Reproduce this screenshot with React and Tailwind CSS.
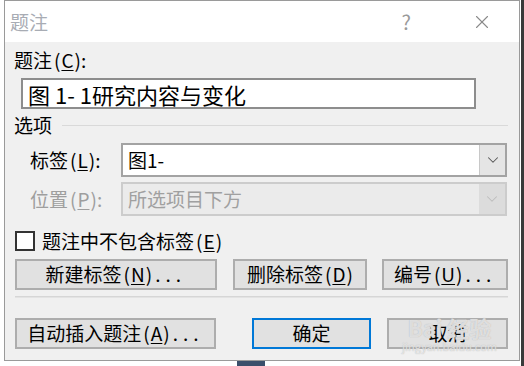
import { ChevronDown, X } from 'lucide-react'

const font = "font-['Noto_Sans_CJK_SC','Noto_Sans',sans-serif]"

function Key({ k }) {
  return (
    <span className="ml-[2px]">
      (<span className="underline underline-offset-2 px-[1px]">{k}</span>)
    </span>
  )
}

function Btn({ children, className = '', primary }) {
  return (
    <div
      className={`h-[31px] flex items-center justify-center bg-[#e1e1e1] text-[19px] text-black ${
        primary ? 'border-2 border-[#0078d7]' : 'border-2 border-[#adadad]'
      } ${className}`}
    >
      {children}
    </div>
  )
}

export default function App() {
  return (
    <div className={`relative w-[524px] h-[366px] bg-white overflow-hidden ${font}`}>
      {/* bits of the window behind */}
      <div className="absolute right-0 top-0 w-[3px] h-[366px] bg-[#3a3a3a]" />
      <div className="absolute left-[237px] bottom-0 w-[28px] h-[5px] bg-[#3b4f6b]" />

      <div className="ml-[4px] w-[516px] h-[361px] border border-[#9a9a9a] bg-[#f0f0f0] flex flex-col">
        {/* Title bar */}
        <div className="h-[41px] bg-white flex items-center pl-[5px] pr-[26px] shrink-0">
          <span className="text-[19px] text-[#a8acb4] leading-none">题注</span>
          <span className="ml-auto text-[20px] text-[#9a9a9a] leading-none mr-[60px]">?</span>
          <X size={22} strokeWidth={1.2} className="text-[#8a8a8a]" />
        </div>

        <div className="flex flex-col pl-[9px] pr-[11px] text-[19px] text-black">
          <div className="mt-[6px] h-[24px] leading-[24px]">
            题注<Key k="C" />:
          </div>
          <div className="mt-[6px] ml-[7px] w-[455px] h-[31px] bg-white border-2 border-[#8d8d8d] flex items-center pl-[5px] text-[22px] leading-none">
            图 1- 1研究内容与变化
          </div>

          {/* options group */}
          <div className="mt-[4px] h-[24px] flex items-center">
            <span className="leading-[24px]">选项</span>
            <div className="flex-1 ml-[10px] h-px bg-[#d9d9d9]" />
          </div>

          <div className="mt-[6px] flex items-center">
            <span className="w-[107px] pl-[16px] shrink-0">
              标签<Key k="L" />:
            </span>
            <div className="w-[386px] h-[34px] bg-white border-2 border-[#a3a3a3] flex items-center">
              <span className="pl-[5px] flex-1 text-[19px]">图1-</span>
              <div className="w-[26px] h-full bg-[#e5e5e5] border-l border-[#c8c8c8] flex items-center justify-center">
                <ChevronDown size={18} strokeWidth={1.4} className="text-[#555]" />
              </div>
            </div>
          </div>

          <div className="mt-[5px] flex items-center">
            <span className="w-[107px] pl-[16px] shrink-0 text-[#9e9e9e]">
              位置<Key k="P" />:
            </span>
            <div className="w-[386px] h-[34px] bg-[#ebebeb] border-2 border-[#cccccc] flex items-center">
              <span className="pl-[5px] flex-1 text-[19px] text-[#a0a0a0]">所选项目下方</span>
              <div className="w-[26px] h-full bg-[#dcdcdc] flex items-center justify-center">
                <ChevronDown size={18} strokeWidth={1.4} className="text-[#bdbdbd]" />
              </div>
            </div>
          </div>

          <div className="mt-[14px] flex items-center h-[21px]">
            <div className="w-[20px] h-[20px] bg-white border-2 border-[#333] ml-[1px]" />
            <span className="ml-[7px] leading-none">
              题注中不包含标签<Key k="E" />
            </span>
          </div>

          <div className="mt-[8px] flex items-center">
            <Btn className="ml-[1px] w-[202px]">
              新建标签<Key k="N" />
              <span className="tracking-[5px] ml-[3px]">...</span>
            </Btn>
            <Btn className="ml-[16px] w-[135px]">
              删除标签<Key k="D" />
            </Btn>
            <Btn className="ml-[15px] w-[126px]">
              编号<Key k="U" />
              <span className="tracking-[5px] ml-[3px]">...</span>
            </Btn>
          </div>

          <div className="mt-[6px] ml-[1px] h-[2px] bg-[#e3e3e3] border-t border-[#d6d6d6]" />

          <div className="mt-[20px] flex items-center">
            <Btn className="ml-[1px] w-[201px]">
              自动插入题注<Key k="A" />
              <span className="tracking-[5px] ml-[3px]">...</span>
            </Btn>
            <Btn primary className="ml-[36px] w-[119px]">
              确定
            </Btn>
            <Btn className="ml-[16px] w-[121px]">取消</Btn>
          </div>
        </div>
      </div>

      {/* watermark */}
      <div className="absolute left-[402px] top-[316px] flex flex-col items-center pointer-events-none">
        <span className="text-[22px] leading-none text-white/60 font-bold [text-shadow:0_0_1px_#aaa]">Bai 经验</span>
        <span className="text-[11px] leading-none mt-[3px] text-white/60 [text-shadow:0_0_1px_#aaa]">jingyan.baidu.com</span>
      </div>
    </div>
  )
}
